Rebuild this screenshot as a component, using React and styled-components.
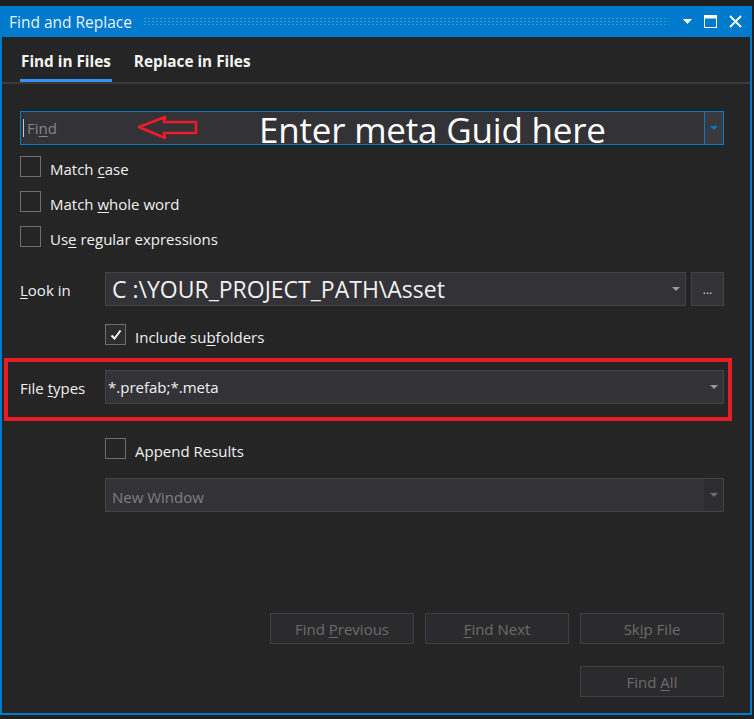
import styled, { createGlobalStyle } from "styled-components";

const Global = createGlobalStyle`
  html, body { margin: 0; padding: 0; background: #1f1f1f; }
  body { font-family: "Open Sans", "Noto Sans", sans-serif; }
`;

const Frame = styled.div`
  box-sizing: border-box;
  width: 752px;
  height: 709px;
  margin-top: 6px;
  border: 2px solid #007acc;
  border-top: none;
  background: #252526;
  display: flex;
  flex-direction: column;
`;

const TitleBar = styled.div`
  height: 31px;
  background: #007acc;
  display: flex;
  align-items: center;
  padding: 0 10px 0 9px;
  margin: 0 -2px;
  color: #e8f2fa;
  font-size: 15.5px;
`;

const Grip = styled.div`
  flex: 1;
  height: 9px;
  margin: 0 14px 0 11px;
  background-image: radial-gradient(circle, rgba(255, 255, 255, 0.22) 0.9px, transparent 1.1px);
  background-size: 4px 3px;
`;

const TitleIcons = styled.div`
  display: flex;
  align-items: center;
  gap: 12px;
  svg { display: block; }
`;

const TabBar = styled.div`
  display: flex;
  height: 45px;
  padding-left: 18px;
  gap: 21px;
  border-bottom: 2px solid #3a3a3c;
`;

const Tab = styled.div`
  box-sizing: border-box;
  display: flex;
  align-items: center;
  padding: 5px 1px 0;
  border-bottom: 3px solid ${(p) => (p.$active ? "#3794ff" : "transparent")};
  color: #f5f5f5;
  font-weight: 700;
  font-size: 15.3px;
`;

const Form = styled.div`
  flex: 1;
  display: flex;
  flex-direction: column;
  padding: 27px 26px 16px 18px;
  color: #f1f1f1;
  font-size: 15px;
  u { text-decoration-thickness: 1px; text-underline-offset: 2px; }
`;

const FindBox = styled.div`
  box-sizing: border-box;
  height: 34px;
  display: flex;
  background: #333337;
  border: 1px solid #007acc;
`;

const FindText = styled.div`
  flex: 1;
  display: flex;
  align-items: center;
  padding-left: 2px;
  overflow: visible;
  white-space: nowrap;
`;

const Caret = styled.span`
  width: 1px;
  height: 18px;
  background: #c8c8c8;
  margin-right: 3px;
`;

const Placeholder = styled.span`
  color: #858585;
  font-size: 15px;
`;

const Note = styled.span`
  color: #ffffff;
  font-size: 35px;
  line-height: 34px;
  margin-left: 60px;
  margin-top: 4px;
  letter-spacing: -0.2px;
`;

const DropPart = styled.div`
  width: 18px;
  display: flex;
  align-items: center;
  justify-content: center;
  background: ${(p) => p.$bg || "transparent"};
  border-left: 1px solid ${(p) => p.$line || "transparent"};
`;

const Triangle = styled.span`
  width: 0;
  height: 0;
  border-left: 4px solid transparent;
  border-right: 4px solid transparent;
  border-top: 4px solid ${(p) => p.$color || "#999999"};
`;

const Checks = styled.div`
  display: flex;
  flex-direction: column;
  gap: 14px;
  margin-top: 11px;
`;

const CheckRow = styled.label`
  display: flex;
  align-items: center;
  gap: 9px;
  height: 21px;
  color: #f1f1f1;
`;

const CheckText = styled.span`
  padding-top: 5px;
`;

const Box = styled.span`
  box-sizing: border-box;
  width: 21px;
  height: 21px;
  border: 1px solid #6e6e6e;
  background: ${(p) => (p.$checked ? "#2d2d30" : "transparent")};
  display: flex;
  align-items: center;
  justify-content: center;
`;

const FieldRow = styled.div`
  display: grid;
  grid-template-columns: 85px 1fr auto;
  align-items: center;
  margin-top: ${(p) => p.$top || 0}px;
`;

const Label = styled.span`
  font-size: 15px;
  color: #f1f1f1;
  padding-top: 1px;
`;

const Combo = styled.div`
  box-sizing: border-box;
  height: 34px;
  display: flex;
  background: #333337;
  border: 1px solid #434346;
  grid-column: ${(p) => (p.$wide ? "2 / 4" : "2")};
  margin-top: ${(p) => p.$top || 0}px;
`;

const ComboText = styled.div`
  flex: 1;
  display: flex;
  align-items: center;
  padding-left: ${(p) => p.$pad || 6}px;
  padding-top: ${(p) => p.$drop || 0}px;
  font-size: ${(p) => p.$size || 15}px;
  color: ${(p) => (p.$dim ? "#7f7f7f" : "#f1f1f1")};
  white-space: nowrap;
`;

const SmallButton = styled.div`
  box-sizing: border-box;
  width: 33px;
  height: 34px;
  margin-left: 5px;
  background: #333337;
  border: 1px solid #434346;
  color: #d0d0d0;
  font-size: 12px;
  display: flex;
  align-items: center;
  justify-content: center;
`;

const Highlight = styled.div`
  margin: 13px -8px 0 -16px;
  padding: 8px 4px 13px 12px;
  border: 4px solid #e81c24;
`;

const Indented = styled.div`
  margin-left: 85px;
  margin-top: ${(p) => p.$top || 0}px;
  display: flex;
  flex-direction: column;
`;

const Spacer = styled.div`
  flex: 1;
`;

const ButtonRow = styled.div`
  display: flex;
  justify-content: flex-end;
  gap: 11px;
  margin-top: ${(p) => p.$top || 0}px;
`;

const Button = styled.div`
  box-sizing: border-box;
  width: 144px;
  height: 31px;
  background: #2b2b2d;
  border: 1px solid #3f3f46;
  color: #6b6b6b;
  font-size: 15px;
  display: flex;
  align-items: center;
  justify-content: center;
`;

function Check({ checked, children }) {
  return (
    <CheckRow>
      <Box $checked={checked}>
        {checked && (
          <svg width="14" height="14" viewBox="0 0 14 14">
            <path d="M2.5 7.5 L5.5 10.5 L11.5 2.5" fill="none" stroke="#ffffff" strokeWidth="2" />
          </svg>
        )}
      </Box>
      <CheckText>{children}</CheckText>
    </CheckRow>
  );
}

export default function App() {
  return (
    <>
      <Global />
      <Frame>
        <TitleBar>
          <span>Find and Replace</span>
          <Grip />
          <TitleIcons>
            <svg width="9" height="5" viewBox="0 0 9 5">
              <path d="M0 0 H9 L4.5 5 Z" fill="#ffffff" />
            </svg>
            <svg width="13" height="13" viewBox="0 0 13 13">
              <rect x="0.5" y="0.5" width="12" height="12" fill="none" stroke="#ffffff" strokeWidth="1" />
              <rect x="0.5" y="0.5" width="12" height="3" fill="#ffffff" />
            </svg>
            <svg width="13" height="13" viewBox="0 0 13 13">
              <path d="M1 1 L12 12 M12 1 L1 12" stroke="#ffffff" strokeWidth="1.8" />
            </svg>
          </TitleIcons>
        </TitleBar>

        <TabBar>
          <Tab $active>Find in Files</Tab>
          <Tab>Replace in Files</Tab>
        </TabBar>

        <Form>
          <FindBox>
            <FindText>
              <Caret />
              <Placeholder>
                Fi<u>n</u>d
              </Placeholder>
              <svg width="62" height="28" viewBox="0 0 62 28" style={{ marginLeft: 80 }}>
                <path
                  d="M2 13 L28 3 L27 8 L59 8 L59 19 L27 19 L28 24 Z"
                  fill="none"
                  stroke="#ee1c25"
                  strokeWidth="2.6"
                  strokeLinejoin="round"
                />
              </svg>
              <Note>Enter meta Guid here</Note>
            </FindText>
            <DropPart $bg="#3a3a3e" $line="#007acc">
              <Triangle $color="#007acc" />
            </DropPart>
          </FindBox>

          <Checks>
            <Check>
              Match <u>c</u>ase
            </Check>
            <Check>
              Match <u>w</u>hole word
            </Check>
            <Check>
              Us<u>e</u> regular expressions
            </Check>
          </Checks>

          <FieldRow $top={25}>
            <Label>
              <u>L</u>ook in
            </Label>
            <Combo>
              <ComboText $size={23} $pad={6}>C :\YOUR_PROJECT_PATH\Asset</ComboText>
              <DropPart>
                <Triangle />
              </DropPart>
            </Combo>
            <SmallButton>...</SmallButton>
          </FieldRow>

          <Indented $top={18}>
            <Check checked>
              Include su<u>b</u>folders
            </Check>
          </Indented>

          <Highlight>
            <FieldRow>
              <Label>
                File <u>t</u>ypes
              </Label>
              <Combo $wide>
                <ComboText $pad={2}>*.prefab;*.meta</ComboText>
                <DropPart>
                  <Triangle />
                </DropPart>
              </Combo>
            </FieldRow>
          </Highlight>

          <Indented $top={17}>
            <Check>Append Results</Check>
            <Combo $top={19}>
              <ComboText $dim $pad={6} $drop={3}>New Window</ComboText>
              <DropPart $bg="#2d2d30">
                <Triangle $color="#6e6e6e" />
              </DropPart>
            </Combo>
          </Indented>

          <Spacer />

          <ButtonRow>
            <Button>
              <span>
                Find <u>P</u>revious
              </span>
            </Button>
            <Button>
              <span>
                <u>F</u>ind Next
              </span>
            </Button>
            <Button>
              <span>
                Sk<u>i</u>p File
              </span>
            </Button>
          </ButtonRow>
          <ButtonRow $top={22}>
            <Button>
              <span>
                Find <u>A</u>ll
              </span>
            </Button>
          </ButtonRow>
        </Form>
      </Frame>
    </>
  );
}
